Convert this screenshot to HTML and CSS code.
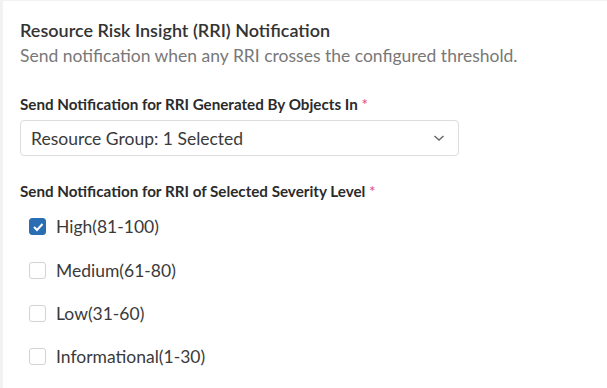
FILE: index.html
```html
<!DOCTYPE html>
<html lang="en">
<head>
    <meta charset="UTF-8">
    <title>RRI Notification</title>
    <link rel="stylesheet" href="styles.css">
</head>
<body>
    <div class="panel">
        <h2 class="title">Resource Risk Insight (RRI) Notification</h2>
        <p class="subtitle">Send notification when any RRI crosses the configured threshold.</p>

        <div class="field">
            <label class="field-label">Send Notification for RRI Generated By Objects In <span class="req">*</span></label>
            <div class="select">
                <span>Resource Group: 1 Selected</span>
                <svg class="chevron" width="12" height="8" viewBox="0 0 12 8"><path d="M1.5 2 L6 6 L10.5 2" fill="none" stroke="#666" stroke-width="1.4"/></svg>
            </div>
        </div>

        <div class="field">
            <label class="field-label">Send Notification for RRI of Selected Severity Level <span class="req">*</span></label>
            <div class="checks">
                <div class="check">
                    <span class="box checked"><svg width="12" height="10" viewBox="0 0 12 10"><path d="M2 5 L5 8 L10.5 2" fill="none" stroke="#fff" stroke-width="2"/></svg></span>
                    High(81-100)
                </div>
                <div class="check"><span class="box"></span>Medium(61-80)</div>
                <div class="check"><span class="box"></span>Low(31-60)</div>
                <div class="check"><span class="box"></span>Informational(1-30)</div>
            </div>
        </div>
    </div>
</body>
</html>
```

FILE: styles.css
```css
/* Basic styling */
body {
    font-family: Lato, "Open Sans", sans-serif;
    background-color: #f2f2f2;
    margin: 0;
    padding: 1px 0 0 3px;
    height: 387px;
    overflow: hidden;
}
.panel {
    background: #fff;
    height: 100%;
    padding: 17px 17px 0;
}
.title {
    margin: 0;
    font-size: 18px;
    font-weight: 600;
    color: #333;
    line-height: 24px;
}
.subtitle {
    margin: 3px 0 0;
    font-size: 17.5px;
    color: #787878;
    line-height: 22px;
}
.field {
    margin-top: 27px;
}
.field + .field {
    margin-top: 25px;
}
.field-label {
    display: block;
    font-size: 15.2px;
    font-weight: 700;
    color: #2b2b2b;
    line-height: 20px;
}
.req {
    color: #e0457b;
    font-weight: 400;
}
.select {
    margin-top: 6px;
    width: 439px;
    height: 36px;
    box-sizing: border-box;
    border: 1px solid #ddd;
    border-radius: 4px;
    padding: 0 13px 0 10px;
    display: flex;
    align-items: center;
    justify-content: space-between;
    font-size: 17.5px;
    color: #3a3a3a;
}
.checks {
    margin-top: 4px;
    padding-left: 9px;
}
.check {
    height: 43.4px;
    display: flex;
    align-items: center;
    font-size: 17.5px;
    color: #3a3a3a;
}
.box {
    width: 17px;
    height: 17px;
    box-sizing: border-box;
    border: 1px solid #d3d3d3;
    border-radius: 3px;
    margin-right: 10px;
    display: flex;
    align-items: center;
    justify-content: center;
}
.box.checked {
    background: #2a6db3;
    border-color: #2a6db3;
}
```
